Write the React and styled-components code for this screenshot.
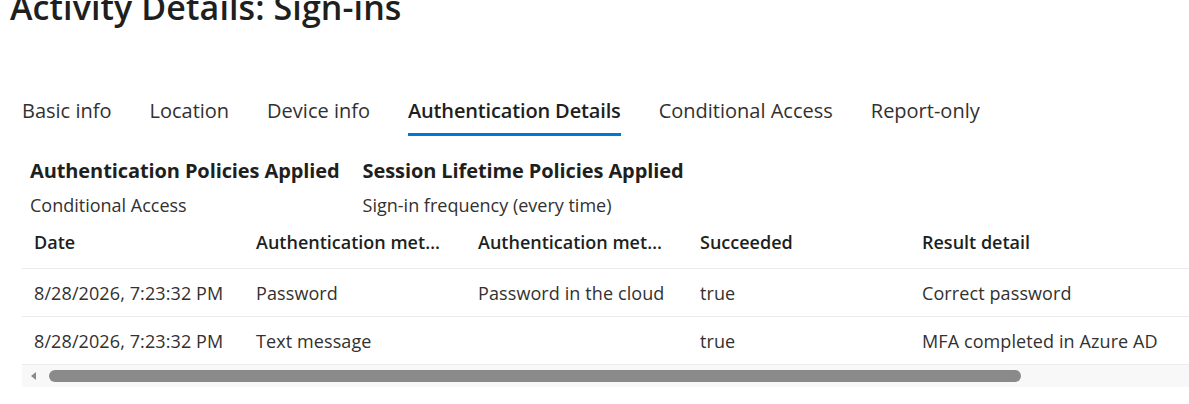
import React from "react";
import styled, { createGlobalStyle } from "styled-components";

const Global = createGlobalStyle`
  html, body { margin: 0; padding: 0; background: #ffffff; }
  body {
    font-family: "Open Sans", "Noto Sans", sans-serif;
    color: #323130;
    overflow: hidden;
  }
`;

const Page = styled.div`
  width: 1189px;
  height: 404px;
  overflow: hidden;
  padding-left: 22px;
  box-sizing: border-box;
`;

const Title = styled.h1`
  margin: -13px 0 0 -12px;
  font-size: 34px;
  line-height: 40px;
  font-weight: 600;
  letter-spacing: 0.1px;
  color: #201f1e;
  white-space: nowrap;
`;

const TabList = styled.div`
  display: flex;
  gap: 38px;
  margin-top: 70px;
`;

const Tab = styled.div`
  font-size: 20px;
  line-height: 28px;
  font-weight: ${(p) => (p.$active ? 600 : 400)};
  color: ${(p) => (p.$active ? "#201f1e" : "#323130")};
  padding-bottom: 8px;
  border-bottom: 3px solid ${(p) => (p.$active ? "#0078d4" : "transparent")};
  white-space: nowrap;
  letter-spacing: ${(p) => (p.$active ? "-0.15px" : "0")};
`;

const Policies = styled.div`
  display: grid;
  grid-template-columns: auto auto;
  justify-content: start;
  column-gap: 23px;
  row-gap: 8px;
  margin-top: 21px;
  padding-left: 8px;
`;

const PolicyHead = styled.div`
  font-size: 20px;
  line-height: 28px;
  font-weight: 700;
  color: #201f1e;
  white-space: nowrap;
  letter-spacing: -0.1px;
`;

const PolicyValue = styled.div`
  font-size: 18px;
  line-height: 24px;
  white-space: nowrap;
`;

const TableWrap = styled.div`
  margin-top: 1px;
  width: 100%;
`;

const Row = styled.div`
  display: grid;
  grid-template-columns: repeat(5, 222px) 1fr;
  height: ${(p) => (p.$head ? "50px" : "47px")};
  border-bottom: 1px solid #edebe9;
  align-items: ${(p) => (p.$head ? "start" : "center")};
`;

const HeadCell = styled.div`
  padding: 0 21px 0 12px;
  margin-top: 12px;
  font-size: 18px;
  line-height: 24px;
  font-weight: 600;
  color: #201f1e;
  white-space: nowrap;
  overflow: hidden;
  text-overflow: ellipsis;
`;

const Cell = styled.div`
  padding: 0 12px;
  margin-top: 1px;
  font-size: 18px;
  line-height: 24px;
  color: #323130;
  white-space: nowrap;
  letter-spacing: 0.1px;
`;

const ScrollBar = styled.div`
  height: 22px;
  background: #f8f8f8;
  display: flex;
  align-items: center;
  padding-left: 9px;
  gap: 13px;
`;

const Arrow = styled.div`
  width: 0;
  height: 0;
  border-top: 4px solid transparent;
  border-bottom: 4px solid transparent;
  border-right: 5px solid #8a8a8a;
`;

const Thumb = styled.div`
  width: 972px;
  height: 12px;
  border-radius: 6px;
  background: #8a8a8a;
`;

const tabs = [
  "Basic info",
  "Location",
  "Device info",
  "Authentication Details",
  "Conditional Access",
  "Report-only",
];

const headers = [
  "Date",
  "Authentication method",
  "Authentication method detail",
  "Succeeded",
  "Result detail",
  "",
];

const rows = [
  ["8/28/2026, 7:23:32 PM", "Password", "Password in the cloud", "true", "Correct password", ""],
  ["8/28/2026, 7:23:32 PM", "Text message", "", "true", "MFA completed in Azure AD", ""],
];

export default function App() {
  return (
    <Page>
      <Global />
      <Title>Activity Details: Sign-ins</Title>
      <TabList>
        {tabs.map((t) => (
          <Tab key={t} $active={t === "Authentication Details"}>
            {t}
          </Tab>
        ))}
      </TabList>
      <Policies>
        <PolicyHead>Authentication Policies Applied</PolicyHead>
        <PolicyHead>Session Lifetime Policies Applied</PolicyHead>
        <PolicyValue>Conditional Access</PolicyValue>
        <PolicyValue>Sign-in frequency (every time)</PolicyValue>
      </Policies>
      <TableWrap>
        <Row $head>
          {headers.map((h, i) => (
            <HeadCell key={i}>{h}</HeadCell>
          ))}
        </Row>
        {rows.map((r, ri) => (
          <Row key={ri}>
            {r.map((c, ci) => (
              <Cell key={ci}>{c}</Cell>
            ))}
          </Row>
        ))}
        <ScrollBar>
          <Arrow />
          <Thumb />
        </ScrollBar>
      </TableWrap>
    </Page>
  );
}
